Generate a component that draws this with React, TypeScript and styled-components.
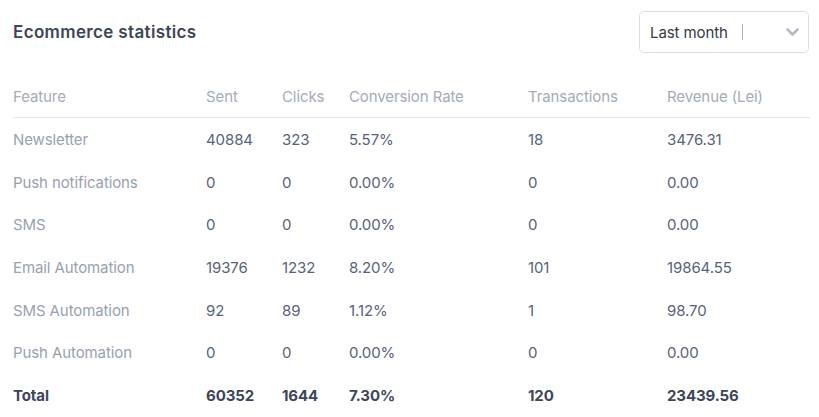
import React from "react";
import styled, { createGlobalStyle } from "styled-components";

const Global = createGlobalStyle`
  html, body { margin: 0; padding: 0; background: #ffffff; }
  body { font-family: "Inter", "Liberation Sans", sans-serif; }
`;

const Page = styled.div`
  width: 819px;
  height: 417px;
  box-sizing: border-box;
  padding: 11px 10px 0 13px;
  background: #fff;
`;

const Header = styled.div`
  display: flex;
  justify-content: space-between;
  align-items: center;
  height: 42px;
`;

const Title = styled.h2`
  margin: 0;
  font-size: 17px;
  font-weight: 600;
  color: #3d4658;
  letter-spacing: 0.35px;
`;

const Select = styled.div`
  width: 170px;
  height: 42px;
  box-sizing: border-box;
  border: 1px solid #dcdfe5;
  border-radius: 5px;
  display: flex;
  align-items: center;
  padding: 0 9px 0 10px;
  font-size: 15px;
  color: #333a45;
`;

const SelectLabel = styled.span`
  letter-spacing: -0.1px;
`;

const Separator = styled.span`
  width: 1px;
  height: 16px;
  background: #a9b0bc;
  margin-left: 14px;
`;

const Chevron = styled.span`
  margin-left: auto;
  display: flex;
  align-items: center;
`;

const Table = styled.table`
  margin-top: 22px;
  width: 797px;
  border-collapse: collapse;
  table-layout: fixed;
  font-size: 15px;
`;

const Th = styled.th<{ $w: number }>`
  width: ${(p) => p.$w}px;
  text-align: left;
  font-weight: 400;
  color: #a3abb8;
  height: 42px;
  padding: 0;
  border-bottom: 1px solid #e3e8ef;
  letter-spacing: -0.1px;
`;

const Td = styled.td<{ $first?: boolean; $total?: boolean }>`
  padding: 0;
  height: 42.7px;
  color: ${(p) => (p.$total ? "#3d4658" : p.$first ? "#98a1af" : "#58627a")};
  font-weight: ${(p) => (p.$total ? 700 : 400)};
  letter-spacing: -0.1px;
`;

const cols = [
  { label: "Feature", w: 193 },
  { label: "Sent", w: 76 },
  { label: "Clicks", w: 67 },
  { label: "Conversion Rate", w: 179 },
  { label: "Transactions", w: 139 },
  { label: "Revenue (Lei)", w: 143 },
];

const rows = [
  ["Newsletter", "40884", "323", "5.57%", "18", "3476.31"],
  ["Push notifications", "0", "0", "0.00%", "0", "0.00"],
  ["SMS", "0", "0", "0.00%", "0", "0.00"],
  ["Email Automation", "19376", "1232", "8.20%", "101", "19864.55"],
  ["SMS Automation", "92", "89", "1.12%", "1", "98.70"],
  ["Push Automation", "0", "0", "0.00%", "0", "0.00"],
];

const total = ["Total", "60352", "1644", "7.30%", "120", "23439.56"];

export default function App() {
  return (
    <>
      <Global />
      <Page>
        <Header>
          <Title>Ecommerce statistics</Title>
          <Select>
            <SelectLabel>Last month</SelectLabel>
            <Separator />
            <Chevron>
              <svg width="13" height="9" viewBox="0 0 13 9">
                <path d="M1.5 1.5 L6.5 6.5 L11.5 1.5" fill="none" stroke="#b3bac5" strokeWidth="2.6" strokeLinecap="round" strokeLinejoin="round" />
              </svg>
            </Chevron>
          </Select>
        </Header>
        <Table>
          <thead>
            <tr>
              {cols.map((c) => (
                <Th key={c.label} $w={c.w}>{c.label}</Th>
              ))}
            </tr>
          </thead>
          <tbody>
            {rows.map((r) => (
              <tr key={r[0]}>
                {r.map((v, i) => (
                  <Td key={i} $first={i === 0}>{v}</Td>
                ))}
              </tr>
            ))}
            <tr>
              {total.map((v, i) => (
                <Td key={i} $total>{v}</Td>
              ))}
            </tr>
          </tbody>
        </Table>
      </Page>
    </>
  );
}
